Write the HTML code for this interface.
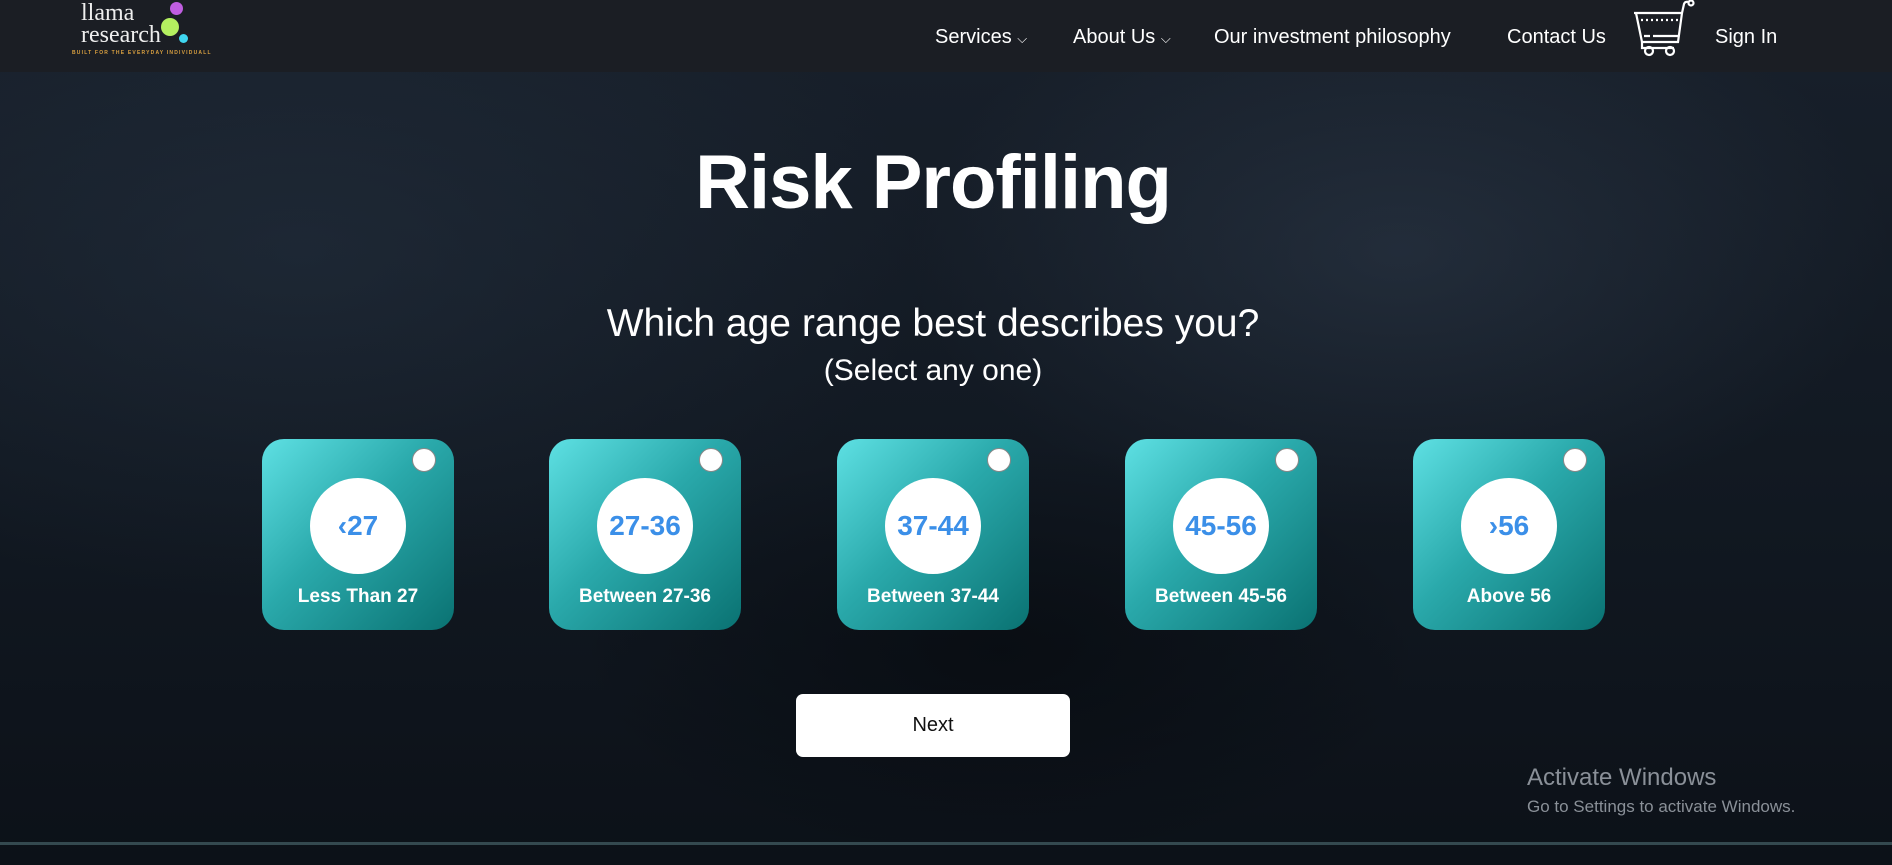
<!DOCTYPE html>
<html><head><meta charset="utf-8"><style>
*{margin:0;padding:0;box-sizing:border-box}
body{width:1892px;height:865px;overflow:hidden;font-family:"Liberation Sans",sans-serif;color:#fff;position:relative;
background:
radial-gradient(ellipse 700px 400px at 1400px 250px,rgba(60,75,95,.35),transparent 70%),
radial-gradient(ellipse 900px 500px at 300px 250px,rgba(45,60,78,.35),transparent 70%),
radial-gradient(ellipse 600px 300px at 1000px 650px,rgba(5,8,12,.6),transparent 70%),
linear-gradient(180deg,#18202b 0%,#111821 60%,#0c1118 100%);}
.nav{position:absolute;left:0;top:0;width:1892px;height:72px;background:#1b1e24}
.nav a{position:absolute;top:26px;font-size:20px;color:#fff;white-space:nowrap}
.ctr{position:absolute;left:0;width:1866px;text-align:center}
.card{position:absolute;top:439px;width:192px;height:191px;border-radius:22px;background:linear-gradient(135deg,#5ee0e3 0%,#2aa9ab 45%,#0a7272 100%)}
.card .r{position:absolute;left:150px;top:9px;width:24px;height:24px;border-radius:50%;background:#fff;border:1.5px solid #888}
.card .c{position:absolute;left:48px;top:39px;width:96px;height:96px;border-radius:50%;background:#fff;color:#3b8fe8;font-weight:bold;font-size:28px;display:flex;align-items:center;justify-content:center}
.card .l{position:absolute;left:0;right:0;top:147px;text-align:center;font-weight:bold;font-size:19px}
</style></head><body>
<div class="nav">
  <div style="position:absolute;left:81px;top:2px;font-family:'Liberation Serif',serif;font-size:24px;line-height:22px;color:#eee">llama<br>research</div>
  <div style="position:absolute;left:170px;top:2px;width:13px;height:13px;border-radius:50%;background:#c05ee0"></div>
  <div style="position:absolute;left:161px;top:18px;width:18px;height:18px;border-radius:50%;background:#b4f060"></div>
  <div style="position:absolute;left:179px;top:34px;width:9px;height:9px;border-radius:50%;background:#3fd6f0"></div>
  <div style="position:absolute;left:72px;top:50px;font-size:5px;letter-spacing:1.2px;color:#d9a040;font-weight:bold">BUILT FOR THE EVERYDAY INDIVIDUALL</div>
  <a style="left:935px">Services <span style="font-size:13px">⌵</span></a>
  <a style="left:1073px">About Us <span style="font-size:13px">⌵</span></a>
  <a style="left:1214px">Our investment philosophy</a>
  <a style="left:1507px">Contact Us</a>
  <svg style="position:absolute;left:1632px;top:0" width="66" height="58" viewBox="0 0 66 58" fill="none" stroke="#fff" stroke-width="2.2">
    <path d="M2 13 H50 L52 4 Q53 1 57 2"/><circle cx="59" cy="3" r="2.5"/>
    <path d="M4 13 L10 42 H46 L50 13"/><path d="M9 20 H46" stroke-dasharray="2 3"/>
    <path d="M12 36 H18 M21 36 H46"/><path d="M10 42 V48 H42"/>
    <circle cx="17" cy="51" r="4"/><circle cx="38" cy="51" r="4"/>
  </svg>
  <a style="left:1715px">Sign In</a>
</div>
<div class="ctr" style="top:139px;font-size:76px;font-weight:bold;letter-spacing:-1px">Risk Profiling</div>
<div class="ctr" style="top:302px;font-size:39px">Which age range best describes you?</div>
<div class="ctr" style="top:354px;font-size:30px">(Select any one)</div>
<div class="card" style="left:262px"><div class="r"></div><div class="c">‹27</div><div class="l">Less Than 27</div></div>
<div class="card" style="left:549px"><div class="r"></div><div class="c">27-36</div><div class="l">Between 27-36</div></div>
<div class="card" style="left:837px"><div class="r"></div><div class="c">37-44</div><div class="l">Between 37-44</div></div>
<div class="card" style="left:1125px"><div class="r"></div><div class="c">45-56</div><div class="l">Between 45-56</div></div>
<div class="card" style="left:1413px"><div class="r"></div><div class="c">›56</div><div class="l">Above 56</div></div>
<div style="position:absolute;left:796px;top:694px;width:274px;height:63px;background:#fff;border-radius:7px;color:#111;font-size:20px;display:flex;align-items:center;justify-content:center">Next</div>
<div style="position:absolute;left:1527px;top:764px;font-size:24px;color:#8a9098">Activate Windows</div>
<div style="position:absolute;left:1527px;top:797px;font-size:17px;color:#8a9098">Go to Settings to activate Windows.</div>
<div style="position:absolute;left:0;top:842px;width:1892px;height:3px;background:#34494f"></div>
</body></html>
